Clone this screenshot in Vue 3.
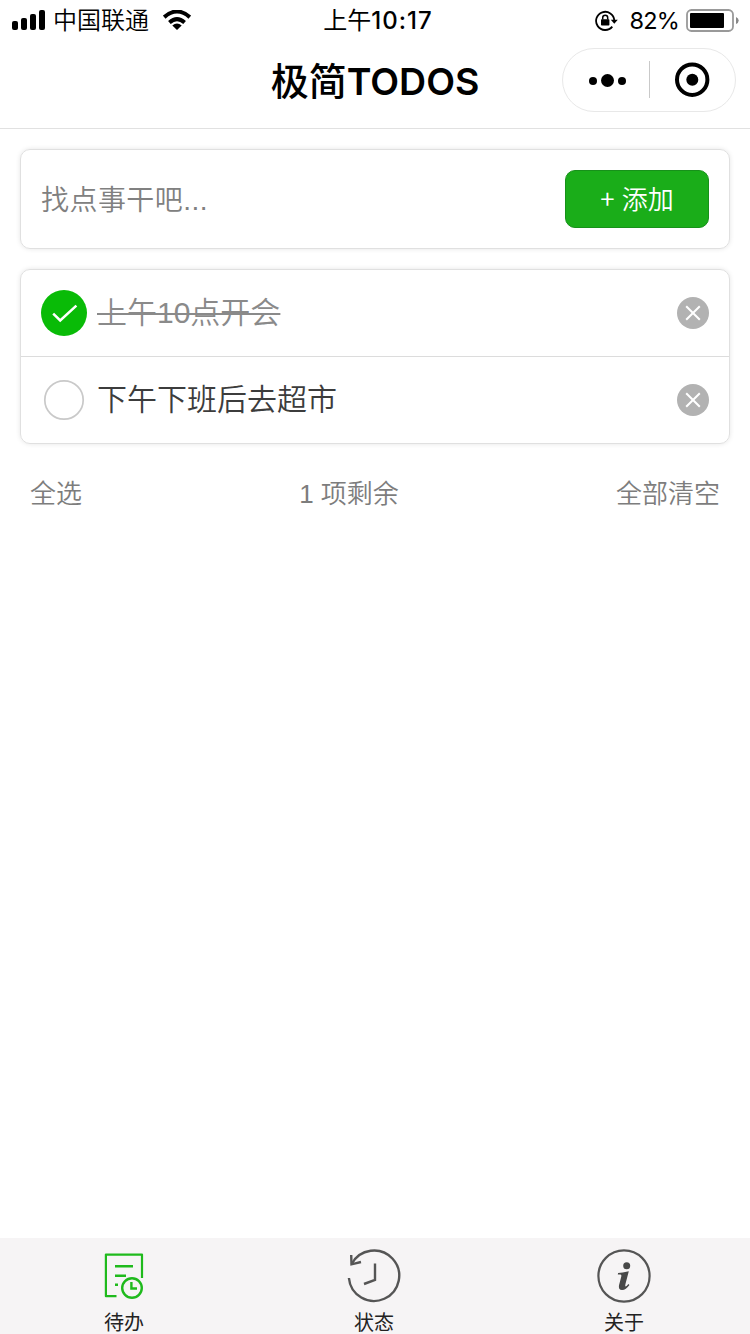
<script setup>
import { ref, computed } from 'vue'

const todos = ref([
  { id: 1, name: '上午10点开会', completed: true },
  { id: 2, name: '下午下班后去超市', completed: false }
])
const leftCount = computed(() => todos.value.filter(t => !t.completed).length)
const toggle = todo => { todo.completed = !todo.completed }
const remove = id => { todos.value = todos.value.filter(t => t.id !== id) }
const clearAll = () => { todos.value = [] }
const selectAll = () => todos.value.forEach(t => { t.completed = true })
</script>

<template>
  <div class="page">
    <header class="status">
      <div class="side">
        <svg class="signal" width="34" height="20" viewBox="0 0 34 20">
          <rect x="0" y="11" width="6" height="9" rx="2" />
          <rect x="9" y="8" width="6" height="12" rx="2" />
          <rect x="18" y="4" width="6" height="16" rx="2" />
          <rect x="27" y="0" width="6" height="20" rx="2" />
        </svg>
        <span class="carrier">中国联通</span>
        <svg class="wifi" width="28" height="20" viewBox="0 0 28 20">
          <path d="M1.2 7.2Q14-4.2 26.8 7.2M6.4 12.4Q14 5.7 21.6 12.4" fill="none" stroke="#000" stroke-width="4" />
          <path d="M9.3 15.6Q14 11.5 18.7 15.6L14 20Z" />
        </svg>
      </div>
      <div class="time">上午<span class="clock">10:17</span></div>
      <div class="side right">
        <svg class="lock" width="24" height="22" viewBox="0 0 24 22">
          <path d="M17.3 16.6A9.1 9.1 0 1 1 19.3 10.5" fill="none" stroke="#000" stroke-width="1.8" />
          <path d="M15.8 9.7H22.8L19.3 13.8Z" />
          <rect x="6" y="9.2" width="8.4" height="6.3" rx=".8" />
          <path d="M7.7 9.6V7.7a2.5 2.5 0 0 1 5 0V9.6" fill="none" stroke="#000" stroke-width="1.5" />
        </svg>
        <span class="percent">82%</span>
        <svg class="battery" width="54" height="24" viewBox="0 0 54 24">
          <rect x="1" y="1" width="46" height="21" rx="4.5" fill="none" stroke="#999" stroke-width="1.8" />
          <rect x="4" y="4" width="34" height="15" rx="1" />
          <path d="M50 8Q52.7 9 52.7 11.5T50 15Z" fill="#888" />
        </svg>
      </div>
    </header>

    <nav class="navbar">
      <h1>极简<span class="latin">TODOS</span></h1>
      <div class="capsule">
        <svg width="174" height="64" viewBox="0 0 174 64">
          <circle cx="31" cy="33" r="4" />
          <circle cx="45.5" cy="32.5" r="6.5" />
          <circle cx="60" cy="33" r="4" />
          <path d="M87.5 13V50" stroke="#c9c9c9" />
          <circle cx="130.2" cy="31.7" r="15.2" fill="none" stroke="#000" stroke-width="4" />
          <circle cx="130.3" cy="31.7" r="6" />
        </svg>
      </div>
    </nav>

    <main>
      <section class="card entry">
        <span class="hint">找点事干吧...</span>
        <button class="add"><span class="plus">+</span>添加</button>
      </section>

      <section class="card list">
        <div v-for="todo in todos" :key="todo.id" class="item" :class="{ done: todo.completed }">
          <svg class="check" width="46" height="46" viewBox="0 0 46 46" @click="toggle(todo)">
            <template v-if="todo.completed">
              <circle cx="23" cy="23" r="23" fill="#09bb07" />
              <path d="M12.2 23.6L19.2 30.5L35.4 15.6" fill="none" stroke="#fff" stroke-width="2.5" />
            </template>
            <circle v-else cx="23" cy="23" r="19.2" fill="#fff" stroke="#c9c9c9" stroke-width="1.7" />
          </svg>
          <span class="name">{{ todo.name }}</span>
          <svg class="remove" width="32" height="32" viewBox="0 0 32 32" @click="remove(todo.id)">
            <circle cx="16" cy="16" r="16" fill="#b2b2b2" />
            <path d="M9.2 9.2L22.8 22.8M22.8 9.2L9.2 22.8" stroke="#fff" stroke-width="2" />
          </svg>
        </div>
      </section>

      <footer class="summary">
        <span @click="selectAll">全选</span>
        <span>{{ leftCount }} 项剩余</span>
        <span @click="clearAll">全部清空</span>
      </footer>
    </main>

    <div class="tabs">
      <a class="tab">
        <svg width="60" height="60" viewBox="0 0 60 60" fill="none" stroke="#1fba1c" stroke-width="2.4">
          <path d="M22.5 51.2H11.9V9.6H48V33" stroke-linejoin="round" stroke-width="2.2" />
          <path d="M21 21.2H39M21 30.7H32M21 39.8H24" />
          <circle cx="38" cy="43" r="9.8" />
          <path d="M37.4 37V43.5H43" />
        </svg>
        <span>待办</span>
      </a>
      <a class="tab">
        <svg width="60" height="60" viewBox="0 0 60 60" fill="none" stroke="#555" stroke-width="2.4">
          <path d="M4.9 33A25.2 25.2 0 1 0 7.7 19" />
          <path d="M7.2 10L7.5 19.3L17 17M31 18.5V35L20 39" />
        </svg>
        <span>状态</span>
      </a>
      <a class="tab">
        <svg width="60" height="60" viewBox="0 0 60 60">
          <circle cx="30" cy="31" r="25.6" fill="none" stroke="#555" stroke-width="2.2" />
          <circle cx="32.7" cy="20.8" r="3.5" fill="#484848" />
          <path d="M24.1 28Q28 27.7 34.8 26.3L31.4 39.2Q30.9 41.6 31.7 41.6Q32.7 41.4 34.4 39.1L35.4 40Q31.7 45.2 28 45Q24.1 44.8 25 40.2L27.3 31.4Q27.8 29.6 26.4 29.6H23.8Z" fill="#484848" />
        </svg>
        <span>关于</span>
      </a>
    </div>
  </div>
</template>

<style>
body {
  background: #fff;
}
</style>

<style scoped>
.page {
  height: 1334px;
  display: flex;
  flex-direction: column;
  box-sizing: border-box;
  overflow: hidden;
  background: #fff;
  color: #000;
  font-family: "Liberation Sans", "Noto Sans CJK SC", sans-serif;
}
.status {
  height: 40px;
  display: grid;
  grid-template-columns: 1fr auto 1fr;
  align-items: center;
  padding: 0 10px 0 12px;
  box-sizing: border-box;
  font: 24px/38px Inter, "Noto Sans CJK SC", sans-serif;
}
.side {
  display: flex;
  align-items: center;
}
.right {
  justify-content: flex-end;
}
.carrier {
  margin: 1px 14px 0 7px;
  font-weight: 350;
}
.time {
  font-family: "Noto Sans CJK SC", sans-serif;
  font-size: 24px;
  line-height: 38px;
  padding-left: 4px;
}
.clock {
  font-family: Inter, sans-serif;
  font-size: 24px;
  font-weight: 500;
  letter-spacing: 1px;
}
.percent {
  margin: 1px 7px 0 11px;
  font-size: 23.5px;
  letter-spacing: -.8px;
}
.lock {
  margin: 1px -1px 0 0;
}
.battery {
  margin-top: 2px;
}
.navbar {
  height: 88px;
  flex: none;
  display: grid;
  grid-template-columns: 1fr auto 1fr;
  align-items: start;
  border-bottom: 1px solid #e1e1e1;
}
h1 {
  grid-column: 2;
  margin: 0;
  font: 500 38px/78px "Noto Sans CJK SC", sans-serif;
}
.latin {
  font-family: Inter, sans-serif;
  font-size: 37.5px;
  font-weight: 600;
}
.capsule {
  justify-self: end;
  width: 172px;
  height: 62px;
  margin: 8px 14px 0 0;
  border: 1px solid #e8e8e8;
  border-radius: 32px;
}
.capsule svg {
  display: block;
  margin: -1px;
}
main {
  flex: 1;
  padding: 20px 20px 0;
}
.card {
  border: 1px solid #e0e0e0;
  border-radius: 10px;
  box-shadow: 0 0 5px rgba(0, 0, 0, .1);
  box-sizing: border-box;
}
.entry {
  height: 100px;
  display: flex;
  align-items: center;
  justify-content: space-between;
  padding: 0 20px;
  margin-bottom: 20px;
}
.hint {
  margin-top: -2px;
  font-size: 28px;
  font-weight: 350;
  letter-spacing: .45px;
  color: #808080;
}
.add {
  width: 144px;
  height: 58px;
  padding: 0 0 2px;
  border: 1px solid #17911a;
  border-radius: 10px;
  background: #1aad19;
  color: #fff;
  font: 350 26px/54px "Liberation Sans", "Noto Sans CJK SC", sans-serif;
}
.plus {
  margin-right: 7px;
  font-family: "Noto Sans CJK SC", sans-serif;
  font-weight: 350;
}
.item {
  height: 86px;
  display: flex;
  align-items: center;
  padding: 0 20px;
}
.item + .item {
  border-top: 1px solid #dcdcdc;
}
.name {
  flex: 1;
  margin-left: 10px;
  font-size: 30px;
  font-weight: 350;
  line-height: 44px;
  color: #3c3c3c;
}
.done .name {
  flex: none;
  margin-right: auto;
  color: #8a8a8a;
  text-decoration: line-through 2px;
}
.summary {
  display: flex;
  justify-content: space-between;
  padding: 0 10px;
  margin-top: 30px;
  font-size: 26px;
  font-weight: 350;
  line-height: 40px;
  color: #7d7d7d;
}
.tabs {
  height: 96px;
  display: grid;
  grid-template-columns: repeat(3, 1fr);
  background: #f6f4f5;
}
.tab {
  display: flex;
  flex-direction: column;
  align-items: center;
  padding: 7px 2px 0 0;
  font-size: 20px;
  line-height: 30px;
  color: #222;
}
.tab span {
  margin-top: 3px;
}
</style>
